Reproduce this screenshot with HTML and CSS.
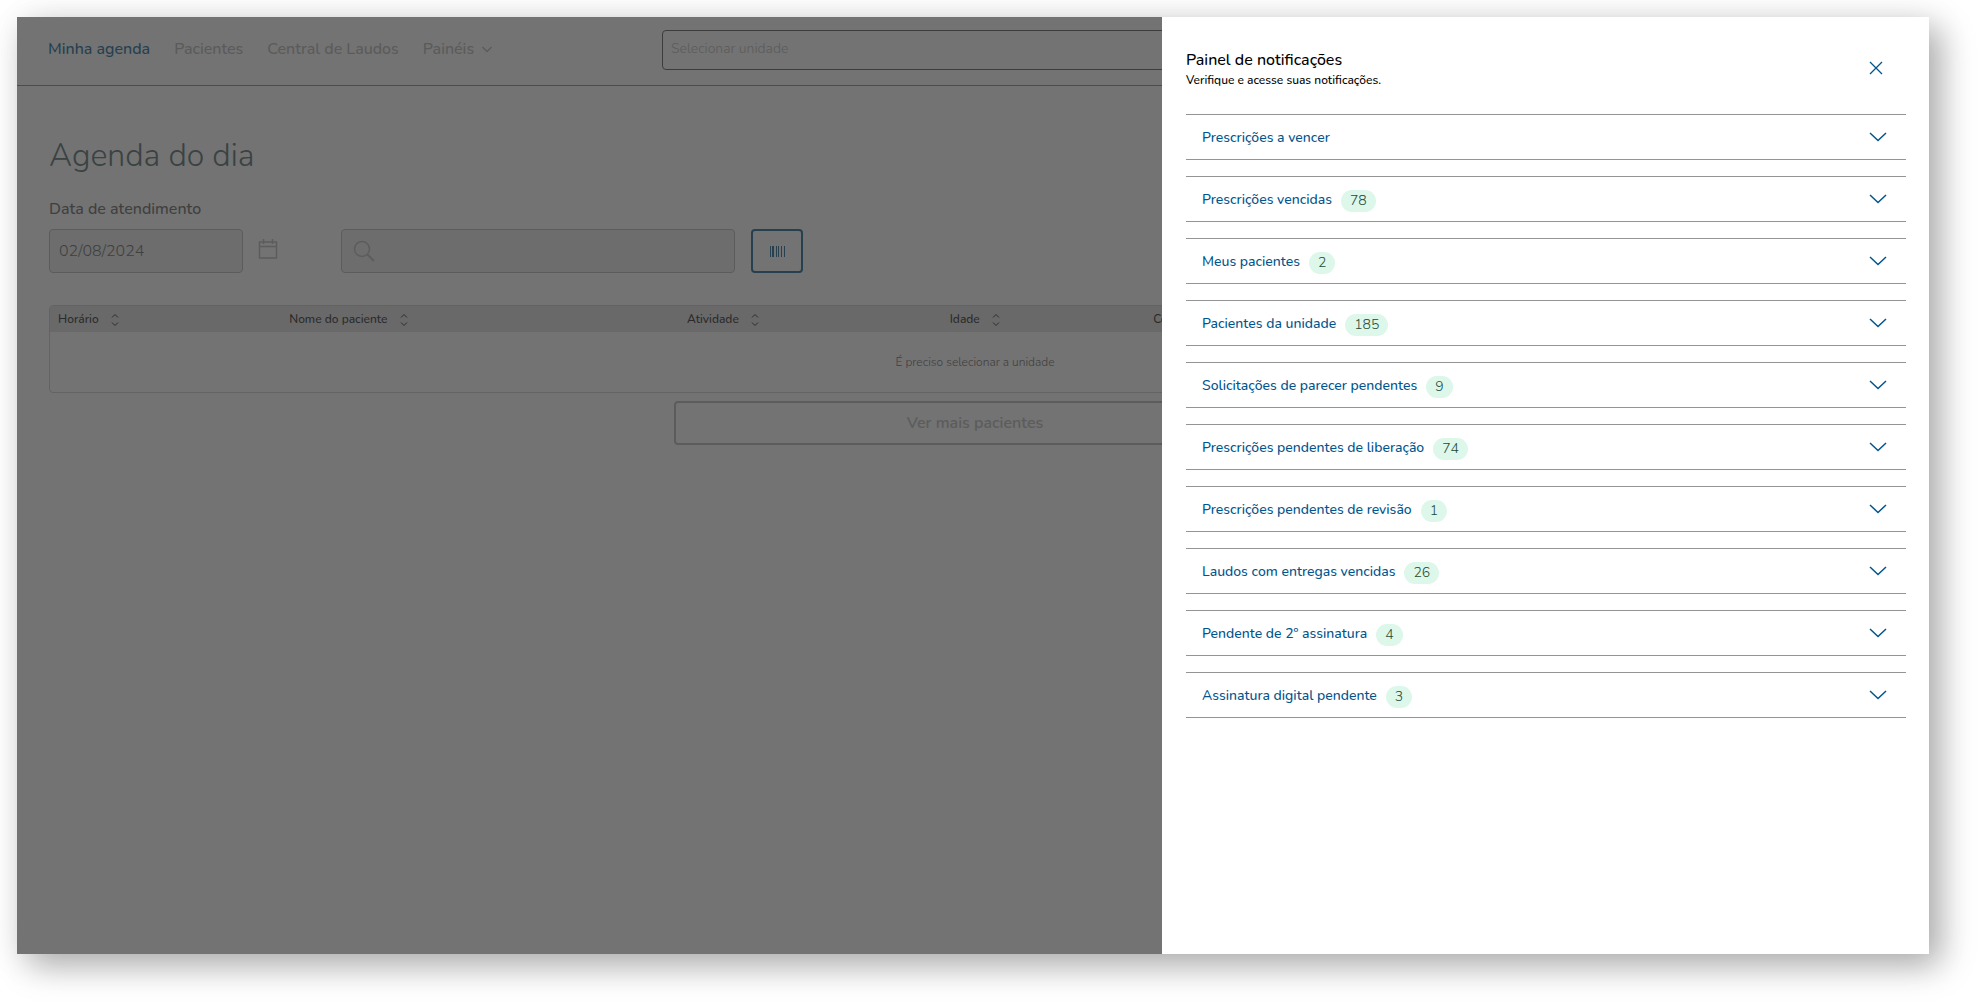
FILE: index.html
```html
<!DOCTYPE html>
<html lang="pt-BR">
<head>
    <meta charset="UTF-8">
    <meta name="viewport" content="width=device-width, initial-scale=1">
    <title>Minha agenda</title>
    <link rel="stylesheet" href="styles.css">
</head>
<body>
    <svg class="sprite" aria-hidden="true">
        <symbol id="chevron" viewBox="0 0 18 10">
            <path d="M1 1 L9 8.5 L17 1" fill="none" stroke="currentColor" stroke-width="1.5"/>
        </symbol>
        <symbol id="chevron-small" viewBox="0 0 10 7">
            <path d="M0.5 1 L5 5.5 L9.5 1" fill="none" stroke="currentColor" stroke-width="1.3"/>
        </symbol>
        <symbol id="sort" viewBox="0 0 8 14">
            <path d="M1 4.5 L4 1.5 L7 4.5 M1 9.5 L4 12.5 L7 9.5" fill="none" stroke="currentColor"/>
        </symbol>
    </svg>

    <div class="app">
        <header class="header">
            <nav class="menu">
                <a href="#" class="active">Minha agenda</a>
                <a href="#">Pacientes</a>
                <a href="#">Central de Laudos</a>
                <a href="#">Painéis <svg class="menu-arrow"><use href="#chevron-small"/></svg></a>
            </nav>
            <select class="unidade" aria-label="Selecionar unidade">
                <option>Selecionar unidade</option>
            </select>
            <div class="header-end"></div>
        </header>

        <main class="content">
            <h1>Agenda do dia</h1>
            <label class="data-label" for="data">Data de atendimento</label>
            <div class="filters">
                <input type="text" id="data" class="data" value="02/08/2024">
                <button type="button" class="calendar" aria-label="Abrir calendário">
                    <svg viewBox="0 0 20 20" width="20" height="20">
                        <path d="M1.5 3 H18.5 V19 H1.5 Z M1.5 7.5 H18.5 M5.5 0 V5 M14.5 0 V5" fill="none" stroke="currentColor" stroke-width="1.5"/>
                    </svg>
                </button>
                <div class="search">
                    <svg viewBox="0 0 22 22" width="22" height="22">
                        <circle cx="9" cy="9" r="7.5" fill="none" stroke="currentColor" stroke-width="1.5"/>
                        <path d="M14.5 14.5 L21 21" stroke="currentColor" stroke-width="2"/>
                    </svg>
                    <input type="text" aria-label="Buscar paciente">
                </div>
                <button type="button" class="barcode" aria-label="Ler código de barras">
                    <svg viewBox="0 0 15 11" width="15" height="11">
                        <path d="M0.5 0 V11 M6.5 0 V11 M11.5 0 V11 M14.5 0 V11 M8.5 0 V11" stroke="currentColor"/>
                        <path d="M3 0 V11" stroke="currentColor" stroke-width="2"/>
                    </svg>
                </button>
            </div>

            <div class="table-box">
                <table>
                    <thead>
                        <tr>
                            <th class="col-horario">Horário <svg class="sort"><use href="#sort"/></svg></th>
                            <th class="col-nome">Nome do paciente <svg class="sort"><use href="#sort"/></svg></th>
                            <th class="col-atividade">Atividade <svg class="sort"><use href="#sort"/></svg></th>
                            <th class="col-idade">Idade <svg class="sort"><use href="#sort"/></svg></th>
                            <th>Convênio <svg class="sort"><use href="#sort"/></svg></th>
                        </tr>
                    </thead>
                    <tbody>
                        <tr>
                            <td colspan="5">É preciso selecionar a unidade</td>
                        </tr>
                    </tbody>
                </table>
            </div>
            <button type="button" class="more" disabled>Ver mais pacientes</button>
        </main>

        <div class="overlay"></div>

        <aside class="panel">
            <div class="panel-header">
                <div>
                    <h2>Painel de notificações</h2>
                    <p>Verifique e acesse suas notificações.</p>
                </div>
                <button type="button" class="close" aria-label="Fechar">
                    <svg viewBox="0 0 14 14" width="14" height="14">
                        <path d="M1 1 L13 13 M13 1 L1 13" stroke="currentColor" stroke-width="1.3"/>
                    </svg>
                </button>
            </div>
            <div class="list">
                <button type="button" class="item">Prescrições a vencer <svg class="arrow"><use href="#chevron"/></svg></button>
                <button type="button" class="item">Prescrições vencidas <span class="badge">78</span><svg class="arrow"><use href="#chevron"/></svg></button>
                <button type="button" class="item">Meus pacientes <span class="badge">2</span><svg class="arrow"><use href="#chevron"/></svg></button>
                <button type="button" class="item">Pacientes da unidade <span class="badge">185</span><svg class="arrow"><use href="#chevron"/></svg></button>
                <button type="button" class="item">Solicitações de parecer pendentes <span class="badge">9</span><svg class="arrow"><use href="#chevron"/></svg></button>
                <button type="button" class="item">Prescrições pendentes de liberação <span class="badge">74</span><svg class="arrow"><use href="#chevron"/></svg></button>
                <button type="button" class="item">Prescrições pendentes de revisão <span class="badge">1</span><svg class="arrow"><use href="#chevron"/></svg></button>
                <button type="button" class="item">Laudos com entregas vencidas <span class="badge">26</span><svg class="arrow"><use href="#chevron"/></svg></button>
                <button type="button" class="item">Pendente de 2º assinatura <span class="badge">4</span><svg class="arrow"><use href="#chevron"/></svg></button>
                <button type="button" class="item">Assinatura digital pendente <span class="badge">3</span><svg class="arrow"><use href="#chevron"/></svg></button>
            </div>
        </aside>
    </div>
</body>
</html>
```
FILE: styles.css
```css
* {
    box-sizing: border-box;
}
body {
    font-family: Nunito, Lato, "Open Sans", sans-serif;
    background-color: #fff;
    color: #8e8e8e;
    margin: 0;
    padding: 17px 48px 48px 17px;
}
button, input, select {
    font-family: inherit;
    margin: 0;
}
button {
    background: none;
    border: none;
    padding: 0;
    cursor: pointer;
}
svg {
    display: block;
}
.sprite {
    position: absolute;
    width: 0;
    height: 0;
}
.app {
    position: relative;
    min-height: calc(100vh - 65px);
    background-color: #fff;
    box-shadow: 12px 12px 32px rgba(0, 0, 0, 0.26), 6px 6px 32px rgba(0, 0, 0, 0.12);
}

/* Topo */
.header {
    display: flex;
    align-items: center;
    padding: 13px 31px 15px;
    border-bottom: 1px solid #a8a8a8;
}
.menu {
    display: flex;
    flex: 1;
    gap: 24px;
    padding-bottom: 2px;
}
.menu a {
    display: flex;
    align-items: center;
    gap: 8px;
    color: #cacaca;
    font-size: 16px;
    font-weight: 500;
    text-decoration: none;
}
.menu a.active {
    color: #548eb0;
}
.menu-arrow {
    width: 10px;
    height: 7px;
}
.unidade {
    appearance: none;
    width: 622px;
    height: 40px;
    padding: 0 8px 3px;
    border: 1px solid #858585;
    border-radius: 4px;
    background-color: #fff;
    color: #ccc;
    font-size: 14px;
    font-weight: 300;
}
.header-end {
    flex: 1;
}

/* Agenda */
.content {
    padding: 48px 28px 32px 32px;
}
h1 {
    margin: 0;
    color: #839393;
    font-size: 32px;
    font-weight: 300;
    line-height: 44px;
}
.data-label {
    display: block;
    margin: 19px 0 8px;
    font-size: 16px;
    font-weight: 500;
    line-height: 24px;
}
.filters {
    display: flex;
    align-items: center;
}
.data, .search {
    height: 44px;
    border: 1px solid #ccc;
    border-radius: 4px;
    background-color: #f2f2f2;
}
.data {
    width: 194px;
    padding: 0 9px;
    color: #8e8e8e;
    font-size: 16px;
    font-weight: 300;
}
.calendar {
    margin: 0 63px 4px 15px;
    color: #ccc;
}
.search {
    display: flex;
    align-items: center;
    gap: 8px;
    width: 394px;
    padding: 0 11px;
    color: #ccc;
}
.search input {
    flex: 1;
    border: none;
    background: none;
    font-size: 16px;
}
.barcode {
    display: flex;
    align-items: center;
    justify-content: center;
    width: 52px;
    height: 44px;
    margin-left: 16px;
    border: 2px solid #548eb0;
    border-radius: 4px;
    color: #548eb0;
}
.table-box {
    margin-top: 32px;
    border: 1px solid #dcdcdc;
    border-radius: 4px;
    overflow: hidden;
}
table {
    width: 100%;
    table-layout: fixed;
    border-collapse: collapse;
}
th {
    height: 26px;
    padding: 0 8px;
    background-color: #e9e9e9;
    color: #606060;
    font-size: 12px;
    font-weight: 500;
    text-align: left;
}
td {
    height: 60px;
    padding: 0;
    font-size: 12px;
    font-weight: 300;
    text-align: center;
}
.col-horario {
    width: 12.5%;
}
.col-nome {
    width: 21.5%;
}
.col-atividade {
    width: 14.2%;
}
.col-idade {
    width: 11%;
}
.sort {
    display: inline-block;
    width: 8px;
    height: 14px;
    margin-left: 9px;
    vertical-align: middle;
}
.more {
    display: block;
    width: 602px;
    height: 44px;
    margin: 8px auto 0;
    border: 2px solid #ccc;
    border-radius: 4px;
    color: #ccc;
    font-size: 16px;
    font-weight: 600;
}
.overlay {
    position: absolute;
    inset: 0;
    background-color: rgba(0, 0, 0, 0.55);
}

/* Painel de notificações */
.panel {
    position: absolute;
    top: 0;
    right: 0;
    bottom: 0;
    width: 767px;
    padding: 32px 23px 24px 24px;
    background-color: #fff;
    color: #000;
    overflow-y: auto;
}
.panel-header {
    display: flex;
    align-items: center;
    justify-content: space-between;
    padding-right: 23px;
}
.panel h2 {
    margin: 0;
    font-size: 16px;
    font-weight: 500;
    line-height: 22px;
}
.panel p {
    margin: 0;
    font-size: 12px;
    font-weight: 500;
    line-height: 18px;
}
.close {
    padding-bottom: 2px;
    color: #00558c;
}
.list {
    display: flex;
    flex-direction: column;
    gap: 16px;
    margin-top: 25px;
}
.item {
    display: flex;
    align-items: center;
    height: 46px;
    padding: 0 19px 0 16px;
    border-top: 1px solid #949494;
    border-bottom: 1px solid #949494;
    color: #00558c;
    font-size: 14px;
    font-weight: 500;
}
.badge {
    height: 22px;
    margin: 3px 0 0 9px;
    padding: 0 9px;
    border-radius: 11px;
    background-color: #ddf7eb;
    color: #1c4a35;
    font-weight: 300;
    line-height: 21px;
}
.arrow {
    width: 18px;
    height: 10px;
    margin-left: auto;
}
```
